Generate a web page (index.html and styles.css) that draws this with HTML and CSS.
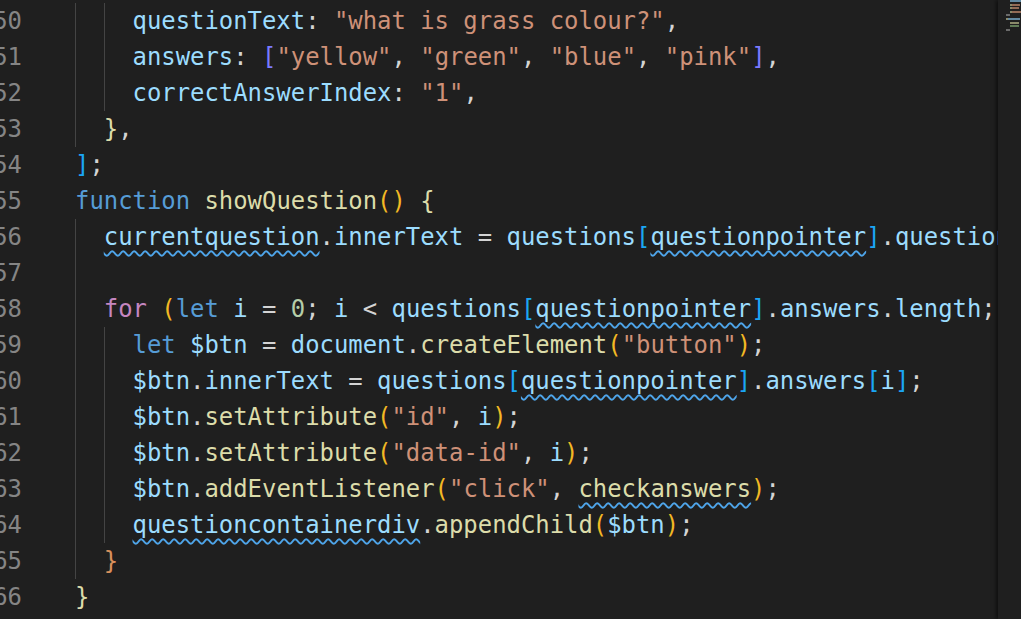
FILE: index.html
```html
<!DOCTYPE html>
<html lang="en">
<head>
<meta charset="utf-8">
<title>showQuestion</title>
<link rel="stylesheet" href="styles.css">
</head>
<body>
<div class="editor">
  <div class="gutter">
    <div class="ln"><span>150</span></div>
    <div class="ln"><span>151</span></div>
    <div class="ln"><span>152</span></div>
    <div class="ln"><span>153</span></div>
    <div class="ln"><span>154</span></div>
    <div class="ln"><span>155</span></div>
    <div class="ln"><span>156</span></div>
    <div class="ln"><span>157</span></div>
    <div class="ln"><span>158</span></div>
    <div class="ln"><span>159</span></div>
    <div class="ln"><span>160</span></div>
    <div class="ln"><span>161</span></div>
    <div class="ln"><span>162</span></div>
    <div class="ln"><span>163</span></div>
    <div class="ln"><span>164</span></div>
    <div class="ln"><span>165</span></div>
    <div class="ln"><span>166</span></div>
  </div>
  <div class="code">
    <div class="line"><span class="ind"></span><span class="ind"></span><span class="pr">questionText</span><span class="p">: </span><span class="s">"what is grass colour?"</span><span class="p">,</span></div>
    <div class="line"><span class="ind"></span><span class="ind"></span><span class="pr">answers</span><span class="p">: </span><span class="b2">[</span><span class="s">"yellow"</span><span class="p">, </span><span class="s">"green"</span><span class="p">, </span><span class="s">"blue"</span><span class="p">, </span><span class="s">"pink"</span><span class="b2">]</span><span class="p">,</span></div>
    <div class="line"><span class="ind"></span><span class="ind"></span><span class="pr">correctAnswerIndex</span><span class="p">: </span><span class="s">"1"</span><span class="p">,</span></div>
    <div class="line"><span class="ind"></span><span class="b0">}</span><span class="p">,</span></div>
    <div class="line"><span class="b3">]</span><span class="p">;</span></div>
    <div class="line"><span class="kw">function</span><span class="p"> </span><span class="fn">showQuestion</span><span class="b1">()</span><span class="p"> </span><span class="b0">{</span></div>
    <div class="line"><span class="ind"></span><span class="pr sq">currentquestion</span><span class="p">.</span><span class="pr">innerText</span><span class="p"> = </span><span class="pr">questions</span><span class="b3">[</span><span class="pr sq">questionpointer</span><span class="b3">]</span><span class="p">.</span><span class="pr">questionText;</span></div>
    <div class="line"><span class="ind"></span></div>
    <div class="line"><span class="ind"></span><span class="ctl">for</span><span class="p"> </span><span class="b1">(</span><span class="kw">let</span><span class="p"> </span><span class="pr">i</span><span class="p"> = </span><span class="num">0</span><span class="p">; </span><span class="pr">i</span><span class="p"> &lt; </span><span class="pr">questions</span><span class="b3">[</span><span class="pr sq">questionpointer</span><span class="b3">]</span><span class="p">.</span><span class="pr">answers</span><span class="p">.</span><span class="pr">length</span><span class="p">; </span><span class="pr">i</span><span class="p">++</span><span class="b1">)</span><span class="p"> {</span></div>
    <div class="line"><span class="ind"></span><span class="ind"></span><span class="kw">let</span><span class="p"> </span><span class="pr">$btn</span><span class="p"> = </span><span class="pr">document</span><span class="p">.</span><span class="fn">createElement</span><span class="b1">(</span><span class="s">"button"</span><span class="b1">)</span><span class="p">;</span></div>
    <div class="line"><span class="ind"></span><span class="ind"></span><span class="pr">$btn</span><span class="p">.</span><span class="pr">innerText</span><span class="p"> = </span><span class="pr">questions</span><span class="b3">[</span><span class="pr sq">questionpointer</span><span class="b3">]</span><span class="p">.</span><span class="pr">answers</span><span class="b3">[</span><span class="pr">i</span><span class="b3">]</span><span class="p">;</span></div>
    <div class="line"><span class="ind"></span><span class="ind"></span><span class="pr">$btn</span><span class="p">.</span><span class="fn">setAttribute</span><span class="b1">(</span><span class="s">"id"</span><span class="p">, </span><span class="pr">i</span><span class="b1">)</span><span class="p">;</span></div>
    <div class="line"><span class="ind"></span><span class="ind"></span><span class="pr">$btn</span><span class="p">.</span><span class="fn">setAttribute</span><span class="b1">(</span><span class="s">"data-id"</span><span class="p">, </span><span class="pr">i</span><span class="b1">)</span><span class="p">;</span></div>
    <div class="line"><span class="ind"></span><span class="ind"></span><span class="pr">$btn</span><span class="p">.</span><span class="fn">addEventListener</span><span class="b1">(</span><span class="s">"click"</span><span class="p">, </span><span class="fn sq">checkanswers</span><span class="b1">)</span><span class="p">;</span></div>
    <div class="line"><span class="ind"></span><span class="ind"></span><span class="pr sq">questioncontainerdiv</span><span class="p">.</span><span class="fn">appendChild</span><span class="b1">(</span><span class="pr">$btn</span><span class="b1">)</span><span class="p">;</span></div>
    <div class="line"><span class="ind"></span><span class="b4">}</span></div>
    <div class="line"><span class="b0">}</span></div>
  </div>
  <div class="minimap">
    <div class="mrow"><span class="mi2"></span><span class="mc-b" style="width:11px"></span></div>
    <div class="mrow"><span class="mi2"></span><span class="mc-y" style="width:2px"></span><span class="mc-o" style="width:8px"></span></div>
    <div class="mrow"><span class="mi2"></span><span class="mc-y" style="width:2px"></span><span class="mc-o" style="width:7px"></span></div>
    <div class="mrow"><span class="mi2"></span><span class="mc-y" style="width:2px"></span><span class="mc-o" style="width:9px"></span></div>
    <div class="mrow"><span class="mi1"></span><span class="mc-g" style="width:4px"></span></div>
    <div class="mrow"><span class="mi1"></span><span class="mc-y" style="width:2px"></span><span class="mc-b" style="width:12px"></span></div>
    <div class="mrow"><span class="mi2"></span><span class="mc-y" style="width:9px"></span></div>
    <div class="mrow"><span class="mi2"></span><span class="mc-c" style="width:9px"></span></div>
    <div class="mrow"><span class="mi1"></span><span class="mc-g" style="width:4px"></span></div>
  </div>
</div>
</body>
</html>
```

FILE: styles.css
```css
html, body {
  margin: 0;
  padding: 0;
  background: #1f1f1f;
  overflow: hidden;
}

.editor {
  display: flex;
  width: 1021px;
  height: 619px;
  background: #1f1f1f;
  font-family: "DejaVu Sans Mono", "Liberation Mono", monospace;
  font-size: 23.9px;
  color: #d4d4d4;
  overflow: hidden;
}

.gutter {
  width: 75px;
  flex: none;
  padding-top: 3px;
  display: flex;
  flex-direction: column;
}

.ln {
  width: 22px;
  height: 36px;
  line-height: 36px;
  display: flex;
  justify-content: flex-end;
  overflow: hidden;
  color: #858585;
  white-space: pre;
}

.code {
  flex: 1;
  min-width: 0;
  padding-top: 3px;
  overflow: hidden;
}

.line {
  height: 36px;
  line-height: 36px;
  white-space: pre;
  display: flex;
  align-items: stretch;
}

.line > span {
  flex: none;
}

.ind {
  display: inline-block;
  width: 2ch;
  box-sizing: border-box;
  border-left: 1px solid #444444;
}

.p { color: #d4d4d4; }
.pr { color: #9cdcfe; }
.s { color: #ce9178; }
.kw { color: #569cd6; }
.ctl { color: #c586c0; }
.fn { color: #dcdcaa; }
.num { color: #b5cea8; }
.b0 { color: #dcdcaa; }
.b1 { color: #f2b824; }
.b2 { color: #7a7aff; }
.b3 { color: #1ba6f5; }
.b4 { color: #d9905c; }

.sq {
  text-decoration: underline wavy #4ea5ea;
  text-decoration-thickness: 1.6px;
  text-underline-offset: 5px;
  text-decoration-skip-ink: none;
}

.minimap {
  width: 23px;
  flex: none;
  background: #1f1f1f;
  box-shadow: -2px 0 4px rgba(0, 0, 0, 0.55);
  display: flex;
  flex-direction: column;
  gap: 1.6px;
  position: relative;
}

.mrow {
  height: 2px;
  display: flex;
}

.mrow span {
  height: 2px;
  opacity: 0.7;
}

.mi1 { width: 8px; }
.mi2 { width: 12px; }
.mc-b { background: #7fb7d9; }
.mc-y { background: #b8b88a; }
.mc-o { background: #c48c6e; }
.mc-g { background: #8a8a8a; }
.mc-c { background: #7ea26e; }
```
